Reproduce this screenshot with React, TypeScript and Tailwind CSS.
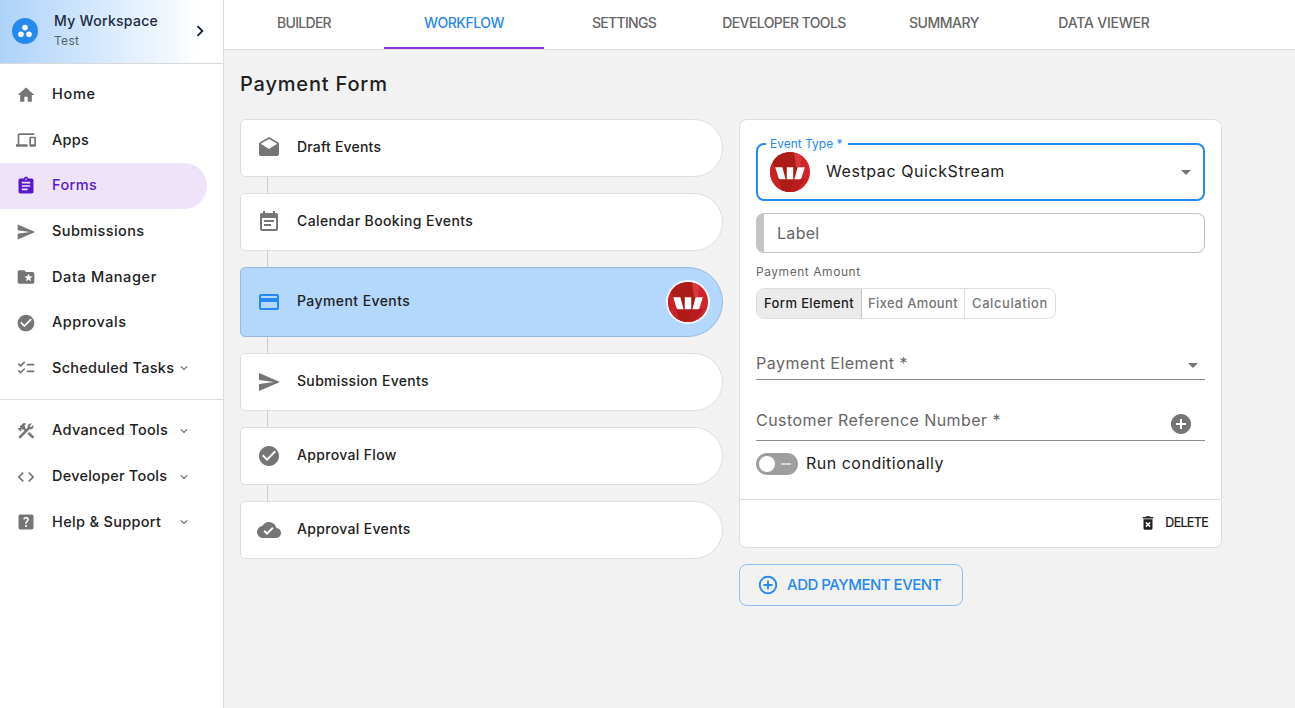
import React from "react";
import type { IconType } from "react-icons";
import {
  MdAddCircle,
  MdAddCircleOutline,
  MdArrowDropDown,
  MdAssignment,
  MdCheckCircle,
  MdChecklist,
  MdChevronRight,
  MdCloudDone,
  MdCode,
  MdConstruction,
  MdCreditCard,
  MdDeleteForever,
  MdDevices,
  MdDrafts,
  MdEventNote,
  MdExpandMore,
  MdFolderSpecial,
  MdHelpCenter,
  MdHome,
  MdSend,
} from "react-icons/md";

type NavItem = {
  label: string;
  icon: IconType;
  tracking: string;
  active?: boolean;
  expandable?: boolean;
};

const mainNav: NavItem[] = [
  { label: "Home", icon: MdHome, tracking: "tracking-[0.7px]" },
  { label: "Apps", icon: MdDevices, tracking: "tracking-[0.3px]" },
  { label: "Forms", icon: MdAssignment, tracking: "tracking-[0.4px]", active: true },
  { label: "Submissions", icon: MdSend, tracking: "tracking-[0.4px]" },
  { label: "Data Manager", icon: MdFolderSpecial, tracking: "tracking-[0.64px]" },
  { label: "Approvals", icon: MdCheckCircle, tracking: "tracking-[0.5px]" },
  { label: "Scheduled Tasks", icon: MdChecklist, tracking: "tracking-[0.28px]", expandable: true },
];

const toolsNav: NavItem[] = [
  { label: "Advanced Tools", icon: MdConstruction, tracking: "tracking-[0.34px]", expandable: true },
  { label: "Developer Tools", icon: MdCode, tracking: "tracking-[0.22px]", expandable: true },
  { label: "Help & Support", icon: MdHelpCenter, tracking: "tracking-[0.33px]", expandable: true },
];

const tabs = [
  { label: "BUILDER", tracking: "tracking-[-0.7px]" },
  { label: "WORKFLOW", tracking: "tracking-[-0.45px]", active: true },
  { label: "SETTINGS", tracking: "tracking-[-0.7px]" },
  { label: "DEVELOPER TOOLS", tracking: "tracking-[-0.6px]" },
  { label: "SUMMARY", tracking: "tracking-[-0.45px]" },
  { label: "DATA VIEWER", tracking: "tracking-[-0.2px]" },
];

const steps = [
  { label: "Draft Events", icon: MdDrafts, tracking: "tracking-[0.2px]" },
  { label: "Calendar Booking Events", icon: MdEventNote, tracking: "tracking-[0.38px]" },
  { label: "Payment Events", icon: MdCreditCard, tracking: "tracking-[0.42px]", active: true },
  { label: "Submission Events", icon: MdSend, tracking: "tracking-[0.33px]" },
  { label: "Approval Flow", icon: MdCheckCircle, tracking: "tracking-[0.33px]" },
  { label: "Approval Events", icon: MdCloudDone, tracking: "tracking-[0.33px]" },
];

function WestpacLogo() {
  return (
    <svg viewBox="0 0 40 40" className="size-10 shrink-0 rounded-full">
      <rect width="40" height="40" fill="#d2232a" />
      <path d="M0 0H24L29 15L20 40H12L4 14Z" fill="#ab1c17" />
      <path d="M0 12L5 15L12 40H0Z" fill="#cb2026" />
      <path d="M24 0H32L30 15H26Z" fill="#d63a3f" />
      <path d="M24 27H36L26 40H20Z" fill="#b91e1e" />
      <g fill="#fff">
        <path d="M5.2 15.3H12.4L15.6 27.3H11C9.4 27.3 8.7 26.6 8.3 25.2Z" />
        <path d="M16.8 15.3H23.2V27.3H16.8Z" />
        <path d="M34.8 15.3H27.6L24.4 27.3H29C30.6 27.3 31.3 26.6 31.7 25.2Z" />
      </g>
    </svg>
  );
}

function NavLink({ label, icon: Icon, tracking, active, expandable }: NavItem) {
  return (
    <a
      className={`flex h-[45.6px] w-[207px] items-center rounded-r-full pl-4 ${
        active ? "bg-[#efe3fa] text-[#5b17d0]" : "text-[#212121]"
      }`}
    >
      <Icon className={`size-5 shrink-0 ${active ? "" : "text-[#757575]"}`} />
      <span
        className={`mb-[1.2px] ml-4 text-[14.5px] leading-5 font-medium whitespace-nowrap ${tracking}`}
      >
        {label}
      </span>
      {expandable && <MdExpandMore className="mr-4 ml-auto size-3.5 shrink-0 text-[#666]" />}
    </a>
  );
}

function Sidebar() {
  return (
    <aside className="flex w-56 shrink-0 flex-col border-r border-[#dedede] bg-white">
      <div className="flex h-16 items-center border-b border-[#dadada] bg-linear-to-r from-[#add2fa] to-white to-90% pb-px pl-3">
        <svg viewBox="0 0 26 26" className="size-[26px] shrink-0">
          <circle cx="13" cy="13" r="13" fill="#2788ef" />
          <g fill="#fff">
            <circle cx="13" cy="9.6" r="2.8" />
            <circle cx="9" cy="16.2" r="2.8" />
            <circle cx="17" cy="16.2" r="2.8" />
          </g>
        </svg>
        <div className="ml-4 flex flex-col">
          <span className="text-sm leading-5 font-medium tracking-[0.3px] text-[#1d2a3f]">
            My Workspace
          </span>
          <span className="text-xs leading-5 tracking-[0.3px] text-[#555f6e]">Test</span>
        </div>
        <MdChevronRight className="mr-3 ml-auto size-[22px] text-[#14203a]" />
      </div>
      <nav className="py-2">
        {mainNav.map((item) => (
          <NavLink key={item.label} {...item} />
        ))}
      </nav>
      <nav className="border-t border-[#dedede] py-2">
        {toolsNav.map((item) => (
          <NavLink key={item.label} {...item} />
        ))}
      </nav>
    </aside>
  );
}

function Tabs() {
  return (
    <div className="flex h-[50px] border-b border-[#dedede] bg-white">
      {tabs.map((tab) => (
        <button
          key={tab.label}
          className={`flex w-40 items-center justify-center border-b-2 pb-0.5 text-sm font-medium whitespace-nowrap ${
            tab.active ? "border-[#8e33e0] text-[#2788ef]" : "border-transparent text-[#666]"
          }`}
        >
          <span className={tab.tracking}>{tab.label}</span>
        </button>
      ))}
    </div>
  );
}

function Steps() {
  return (
    <div className="flex w-[483px] flex-col">
      {steps.map(({ label, icon: Icon, tracking, active }, i) => (
        <React.Fragment key={label}>
          {i > 0 && <div className="ml-[27px] h-4 w-px bg-[#ccc]" />}
          <div
            className={`flex items-center rounded-l-[5px] border pr-3 pl-4 ${
              active
                ? "h-[70px] rounded-r-[35px] border-[#99bbdd] bg-[#b4d8fb]"
                : "h-[58px] rounded-r-[29px] border-[#dedede] bg-white"
            }`}
          >
            <Icon className={`size-6 ${active ? "text-[#2788ef]" : "text-[#757575]"}`} />
            <span className={`mb-0.5 ml-4 text-sm font-medium text-[#212121] ${tracking}`}>
              {label}
            </span>
            {active && (
              <div className="ml-auto rounded-full border-2 border-[#f7f7f7]">
                <WestpacLogo />
              </div>
            )}
          </div>
        </React.Fragment>
      ))}
    </div>
  );
}

function EventPanel() {
  return (
    <div className="h-[429px] w-full rounded-lg border border-[#dedede] bg-white">
      <div className="flex h-[380px] flex-col border-b border-[#dedede] px-4 pt-[23px]">
        <div className="relative flex h-[58px] shrink-0 items-center rounded-lg border-2 border-[#2788ef] px-3">
          <span className="absolute -top-[9px] left-2 bg-white pr-[5px] pl-1 text-xs leading-4 whitespace-nowrap text-[#2788ef]">
            Event Type *
          </span>
          <WestpacLogo />
          <span className="mb-0.5 ml-4 text-base tracking-[0.58px] text-[#212121]">
            Westpac QuickStream
          </span>
          <MdArrowDropDown className="-mr-[7px] ml-auto size-6 text-[#757575]" />
        </div>
        <div className="mt-3 flex h-10 shrink-0 items-center rounded-lg border border-l-8 border-[#c4c4c4] pl-[13px] text-base text-[#666]">
          <span className="tracking-[0.3px]">Label</span>
        </div>
        <span className="mt-[9px] text-xs leading-5 tracking-[0.55px] text-[#666]">
          Payment Amount
        </span>
        <div className="mt-[6px] flex h-[31px] w-[300px] shrink-0 overflow-hidden rounded-lg border border-[#dedede] text-[13px] font-medium whitespace-nowrap text-[#757575]">
          <button className="w-[105px] border-r border-[#c4c4c4] bg-[#ebebeb] tracking-[0.38px] text-[#212121]">
            Form Element
          </button>
          <button className="w-[103px] border-r border-[#dedede] tracking-[0.35px]">
            Fixed Amount
          </button>
          <button className="flex-1 tracking-[0.58px]">Calculation</button>
        </div>
        <div className="mt-[29px] flex h-8 shrink-0 items-center border-b border-[#8c8c8c] text-base text-[#666]">
          <span className="mb-0.5 tracking-[0.48px]">Payment Element *</span>
          <MdArrowDropDown className="mt-[3px] ml-auto size-6 text-[#757575]" />
        </div>
        <div className="mt-6 flex h-[37px] shrink-0 items-center border-b border-[#8c8c8c] pr-3 text-base text-[#666]">
          <span className="mb-[5px] tracking-[0.44px]">Customer Reference Number *</span>
          <MdAddCircle className="mt-1 ml-auto size-6 text-[#757575]" />
        </div>
        <div className="mt-2.5 flex items-center gap-2">
          <div className="flex h-[22px] w-[42px] items-center justify-between rounded-full bg-[#9e9e9e] pr-[7px] pl-[3px]">
            <span className="size-4 rounded-full bg-white" />
            <span className="h-0.5 w-2.5 bg-[#d4d4d4]" />
          </div>
          <span className="mb-px text-base tracking-[0.5px] text-[#212121]">
            Run conditionally
          </span>
        </div>
      </div>
      <div className="flex h-[47px] items-center justify-end gap-2 pr-[13px] pb-px text-[#212121]">
        <MdDeleteForever className="size-[18px]" />
        <span className="text-[12.5px] font-medium tracking-[-0.7px]">DELETE</span>
      </div>
    </div>
  );
}

export default function App() {
  return (
    <div className="flex h-screen overflow-hidden bg-[#f2f2f2] font-['Inter',sans-serif]">
      <Sidebar />
      <div className="flex flex-1 flex-col">
        <Tabs />
        <main className="px-4 pt-5">
          <h1 className="text-xl leading-7 font-medium tracking-[0.82px] text-[#212121]">
            Payment Form
          </h1>
          <div className="mt-[21px] flex items-start gap-4">
            <Steps />
            <div className="flex w-[483px] flex-col items-start gap-4">
              <EventPanel />
              <button className="flex h-[42px] w-56 items-center rounded-lg border border-[#8fc0f7] pl-[17px] whitespace-nowrap text-[#2788ef]">
                <MdAddCircleOutline className="size-[22px]" />
                <span className="ml-2 text-[15px] font-medium tracking-[-0.5px]">
                  ADD PAYMENT EVENT
                </span>
              </button>
            </div>
          </div>
        </main>
      </div>
    </div>
  );
}
